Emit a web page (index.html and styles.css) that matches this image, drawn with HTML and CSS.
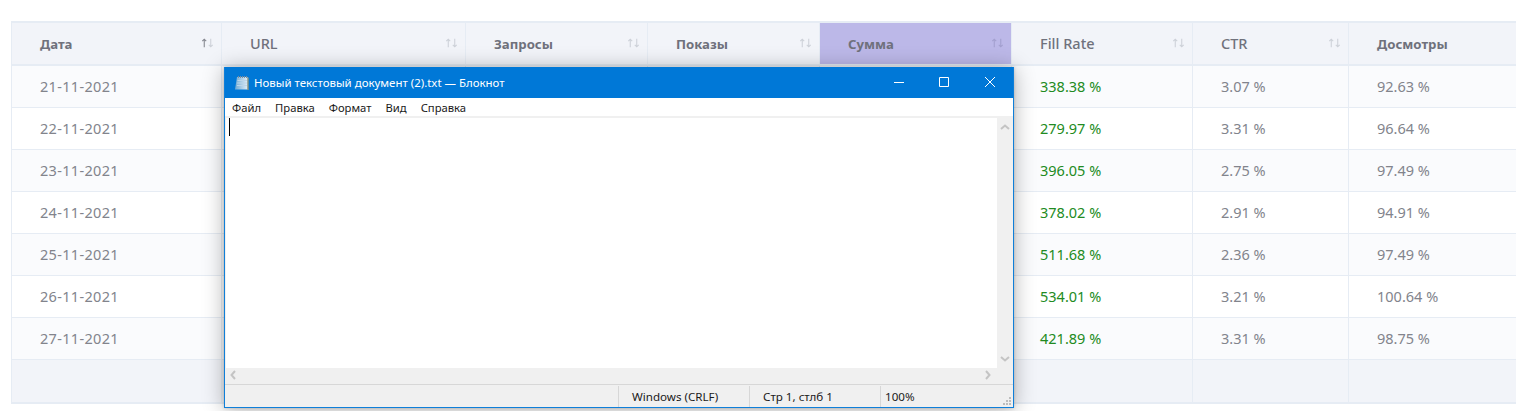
FILE: index.html
```html
<!DOCTYPE html>
<html lang="ru">
<head>
<meta charset="utf-8">
<title>Статистика</title>
<link rel="stylesheet" href="styles.css">
</head>
<body>
<main class="page">
  <div class="table-wrap">
    <table class="stats">
      <colgroup>
        <col class="c-date"><col class="c-url"><col class="c-req"><col class="c-imp"><col class="c-sum"><col class="c-fill"><col class="c-ctr"><col class="c-view">
      </colgroup>
      <thead>
        <tr>
          <th class="cyr"><span>Дата</span><svg class="sort" viewBox="0 0 12 9"><path class="dark" d="M3 8.500V1M1.200 2.800 3 1l1.800 1.800"/><path d="M9 .5V8M7.200 6.200 9 8l1.800-1.800"/></svg></th>
          <th class="lat"><span>URL</span><svg class="sort" viewBox="0 0 12 9"><path d="M3 8.500V1M1.200 2.800 3 1l1.800 1.800"/><path d="M9 .5V8M7.200 6.200 9 8l1.800-1.800"/></svg></th>
          <th class="cyr"><span>Запросы</span><svg class="sort" viewBox="0 0 12 9"><path d="M3 8.500V1M1.200 2.800 3 1l1.800 1.800"/><path d="M9 .5V8M7.200 6.200 9 8l1.800-1.800"/></svg></th>
          <th class="cyr"><span>Показы</span><svg class="sort" viewBox="0 0 12 9"><path d="M3 8.500V1M1.200 2.800 3 1l1.800 1.800"/><path d="M9 .5V8M7.200 6.200 9 8l1.800-1.800"/></svg></th>
          <th class="cyr active"><span>Сумма</span><svg class="sort" viewBox="0 0 12 9"><path d="M3 8.500V1M1.200 2.800 3 1l1.800 1.800"/><path d="M9 .5V8M7.200 6.200 9 8l1.800-1.800"/></svg></th>
          <th class="lat"><span>Fill Rate</span><svg class="sort" viewBox="0 0 12 9"><path d="M3 8.500V1M1.200 2.800 3 1l1.800 1.800"/><path d="M9 .5V8M7.200 6.200 9 8l1.800-1.800"/></svg></th>
          <th class="lat"><span>CTR</span><svg class="sort" viewBox="0 0 12 9"><path d="M3 8.500V1M1.200 2.800 3 1l1.800 1.800"/><path d="M9 .5V8M7.200 6.200 9 8l1.800-1.800"/></svg></th>
          <th class="cyr"><span>Досмотры</span></th>
        </tr>
      </thead>
      <tbody>
        <tr><td class="date">21-11-2021</td><td></td><td></td><td></td><td></td><td class="good">338.38 %</td><td>3.07 %</td><td>92.63 %</td></tr>
        <tr><td class="date">22-11-2021</td><td></td><td></td><td></td><td></td><td class="good">279.97 %</td><td>3.31 %</td><td>96.64 %</td></tr>
        <tr><td class="date">23-11-2021</td><td></td><td></td><td></td><td></td><td class="good">396.05 %</td><td>2.75 %</td><td>97.49 %</td></tr>
        <tr><td class="date">24-11-2021</td><td></td><td></td><td></td><td></td><td class="good">378.02 %</td><td>2.91 %</td><td>94.91 %</td></tr>
        <tr><td class="date">25-11-2021</td><td></td><td></td><td></td><td></td><td class="good">511.68 %</td><td>2.36 %</td><td>97.49 %</td></tr>
        <tr><td class="date">26-11-2021</td><td></td><td></td><td></td><td></td><td class="good">534.01 %</td><td>3.21 %</td><td>100.64 %</td></tr>
        <tr><td class="date">27-11-2021</td><td></td><td></td><td></td><td></td><td class="good">421.89 %</td><td>3.31 %</td><td>98.75 %</td></tr>
      </tbody>
      <tfoot>
        <tr><td></td><td></td><td></td><td></td><td></td><td></td><td></td><td></td></tr>
      </tfoot>
    </table>
  </div>

  <section class="notepad">
    <header class="np-title">
      <svg class="np-icon" viewBox="0 0 16 16">
        <defs>
          <linearGradient id="sheet" x1="0" y1="0" x2="1" y2="0">
            <stop offset="0" stop-color="#6fa9d3"/>
            <stop offset="1" stop-color="#dfeef8"/>
          </linearGradient>
        </defs>
        <path fill="url(#sheet)" d="M3 2h10.500v12.500H1z"/>
        <path fill="#bcd6ea" d="M3.500 5h9.500v1H3.500zM3.200 7.500H13v1H3.200zM2.900 10H13v1H2.900z"/>
        <path fill="#7c8f9f" d="M4 1h1v2H4zM6 1h1v2H6zM8 1h1v2H8zM10 1h1v2h-1zM12 1h1v2h-1z"/>
        <path fill="#c9a15a" d="M13.500 2.500h1v12.500h-1z"/>
      </svg>
      <span class="np-name">Новый текстовый документ (2).txt — Блокнот</span>
      <div class="np-controls">
        <svg class="np-btn" viewBox="0 0 46 30"><path d="M19 15.500h10"/></svg>
        <svg class="np-btn" viewBox="0 0 46 30"><path d="M18.500 10.500h9v9h-9z"/></svg>
        <svg class="np-btn" viewBox="0 0 46 30"><path d="M18 10l10 10M28 10 18 20"/></svg>
      </div>
    </header>
    <nav class="np-menu">
      <span>Файл</span><span>Правка</span><span>Формат</span><span>Вид</span><span>Справка</span>
    </nav>
    <div class="np-body">
      <div class="np-edit"><i class="caret"></i></div>
      <div class="np-vscroll">
        <svg class="arrow" viewBox="0 0 10 6"><path d="M1 5 5 1.500 9 5"/></svg>
        <svg class="arrow" viewBox="0 0 10 6"><path d="M1 1 5 4.500 9 1"/></svg>
      </div>
    </div>
    <div class="np-hscroll">
      <svg class="arrow-h" viewBox="0 0 6 10"><path d="M5 1 1.500 5 5 9"/></svg>
      <svg class="arrow-h" viewBox="0 0 6 10"><path d="M1 1 4.500 5 1 9"/></svg>
    </div>
    <footer class="np-status">
      <span class="st st-empty"></span>
      <span class="st st-enc">Windows (CRLF)</span>
      <span class="st st-pos">Стр 1, стлб 1</span>
      <span class="st st-zoom">100%</span>
      <svg class="grip" viewBox="0 0 10 10"><path d="M7 1h2v2H7zM4 4h2v2H4zM7 4h2v2H7zM1 7h2v2H1zM4 7h2v2H4zM7 7h2v2H7z"/></svg>
    </footer>
  </section>
</main>
</body>
</html>
```
FILE: styles.css
```css
* { box-sizing: border-box; }
html, body { margin: 0; height: 100%; background: #fff; overflow: hidden; }

.page { position: relative; height: 411px; overflow: hidden; }

.table-wrap { padding: 21px 0 0 11px; width: 1516px; overflow: hidden; }

.stats {
  table-layout: fixed;
  width: 1605px;
  border-collapse: separate;
  border-spacing: 0;
  font-family: "Noto Sans", "Open Sans", sans-serif;
  font-size: 14.5px;
  color: #82848c;
  border-top: 2px solid #e6ecf4;
  border-left: 1px solid #e6ecf4;
  border-bottom: 2px solid #e6ecf4;
}
.c-date { width: 210px; }
.c-url { width: 244px; }
.c-req { width: 182px; }
.c-imp { width: 172px; }
.c-sum { width: 192px; }
.c-fill { width: 181px; }
.c-ctr { width: 156px; }
.c-view { width: 268px; }

.stats th {
  height: 43px;
  padding: 0 0 0 28px;
  background: #f2f4f9;
  border-right: 1px solid #e6ecf4;
  border-bottom: 2px solid #e6ecf4;
  text-align: left;
  color: #6f717c;
  position: relative;
}
.stats th.cyr { font-weight: 700; font-size: 13.2px; }
.stats th.lat { font-weight: 500; font-size: 14.5px; padding-bottom: 2px; }
.stats th.active { background: #bcb8e8; }

.sort {
  position: absolute;
  right: 7px;
  top: 15px;
  width: 13px;
  height: 10px;
  fill: none;
  stroke: #cdd1d8;
  stroke-width: 1;
}
.sort .dark { stroke: #85878f; }
.active .sort { stroke: #a3a0cf; }

.stats td {
  height: 42px;
  padding: 0 0 2px 28px;
  border-right: 1px solid #e6ecf4;
  border-bottom: 1px solid #e6ecf4;
  background: #fff;
}
.stats tbody tr:nth-child(odd) td { background: #fafbfd; }
.stats tfoot td { background: #f2f4f9; border-bottom: 0; height: 42px; }
.stats td.good { color: #228b22; }
.stats td.date { letter-spacing: .33px; }

.notepad {
  position: absolute;
  left: 224px;
  top: 67px;
  width: 790px;
  height: 341px;
  display: flex;
  flex-direction: column;
  background: #f0f0f0;
  border: 1px solid #0f7fd9;
  border-top: 0;
  box-shadow: 0 0 3px rgba(0, 0, 0, .18), 0 2px 20px rgba(0, 0, 0, .3);
  font-family: "Noto Sans", "Open Sans", sans-serif;
  font-size: 11.45px;
  color: #1a1a1a;
}
.np-title {
  height: 31px;
  flex: none;
  display: flex;
  align-items: center;
  background: #0078d7;
  color: #fff;
  padding-left: 9px;
}
.np-icon { width: 16px; height: 16px; flex: none; margin-right: 4px; }
.np-name { flex: 1; white-space: nowrap; }
.np-controls { display: flex; align-self: flex-start; }
.np-btn { width: 46px; height: 30px; fill: none; stroke: #fff; stroke-width: 1; }

.np-menu {
  height: 18px;
  flex: none;
  background: #fff;
  display: flex;
  align-items: center;
  gap: 14px;
  padding-left: 7px;
  font-size: 11.25px;
}

.np-body { height: 252px; flex: none; display: flex; }
.np-edit { flex: 1; background: #fff; border-top: 2px solid #f0f0f0; border-left: 1px solid #f0f0f0; }
.caret { display: block; width: 1px; height: 18px; background: #000; margin: 0 0 0 3px; }
.np-vscroll {
  width: 16px;
  background: #f0f0f0;
  display: flex;
  flex-direction: column;
  justify-content: space-between;
  align-items: center;
  padding: 8px 0 6px;
}
.arrow { width: 10px; height: 6px; fill: none; stroke: #c4c4c4; stroke-width: 2; }

.np-hscroll {
  height: 16px;
  flex: none;
  display: flex;
  justify-content: space-between;
  align-items: center;
  padding: 0 22px 2px 5px;
}
.arrow-h { width: 6px; height: 10px; fill: none; stroke: #c4c4c4; stroke-width: 2; }

.np-status {
  flex: 1;
  display: flex;
  align-items: center;
  border-top: 1px solid #d7d7d7;
  position: relative;
  font-size: 11.6px;
}
.st { height: calc(100% - 1px); margin-top: 1px; display: flex; align-items: center; border-right: 1px solid #d7d7d7; white-space: nowrap; }
.st-empty { width: 394px; }
.st-enc { width: 131px; padding-left: 13px; }
.st-pos { width: 131px; padding-left: 13px; }
.st-zoom { padding-left: 4px; border-right: 0; }
.grip { position: absolute; right: 1px; bottom: 1px; width: 10px; height: 10px; fill: #bdbdbd; }
```
